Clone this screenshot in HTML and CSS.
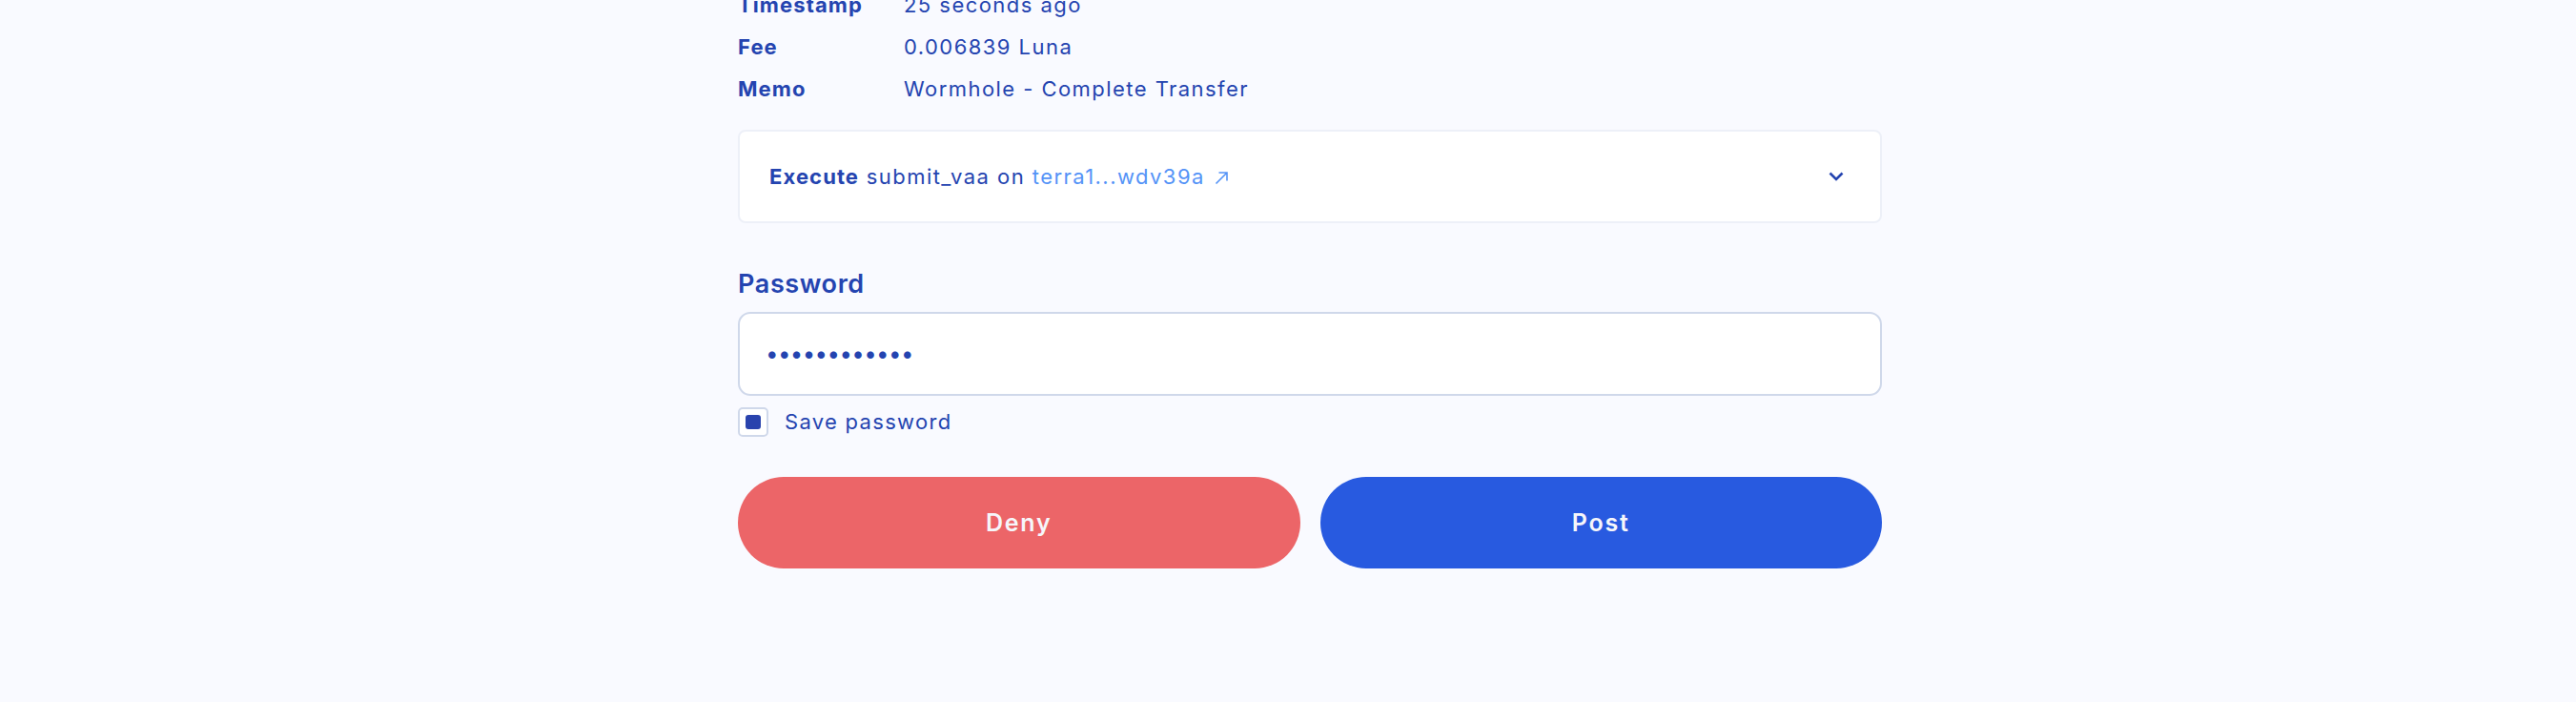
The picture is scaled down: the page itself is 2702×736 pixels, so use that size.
FILE: index.html
```html
<!DOCTYPE html>
<html lang="en">
<head>
<meta charset="utf-8">
<title>Confirm transaction</title>
<link rel="stylesheet" href="styles.css">
</head>
<body>
<main class="page">
  <dl class="details">
    <dt>Timestamp</dt><dd>25 seconds ago</dd>
    <dt>Fee</dt><dd>0.006839 Luna</dd>
    <dt>Memo</dt><dd>Wormhole - Complete Transfer</dd>
  </dl>

  <section class="msg">
    <div class="msg-text">
      <strong>Execute</strong> submit_vaa on <a class="link" href="#">terra1...wdv39a<svg class="ext" width="15" height="15" viewBox="0 0 15 15" aria-hidden="true"><path d="M1.5 13.5 L13 2 M4.5 2 H13 V10.5" fill="none" stroke="currentColor" stroke-width="1.6"/></svg></a>
    </div>
    <svg class="chev" width="16" height="10" viewBox="0 0 16 10" aria-hidden="true"><path d="M1.5 1.5 L8 8 L14.5 1.5" fill="none" stroke="currentColor" stroke-width="2.6"/></svg>
  </section>

  <label class="field-label" for="pw">Password</label>
  <div class="input" id="pw"><span class="dots">••••••••••••</span></div>

  <div class="check-row">
    <span class="checkbox"><span class="checkbox-mark"></span></span>
    <span class="check-label">Save password</span>
  </div>

  <div class="actions">
    <button class="btn btn-deny">Deny</button>
    <button class="btn btn-post">Post</button>
  </div>
</main>
</body>
</html>
```
FILE: styles.css
```css
html, body {
  margin: 0;
  padding: 0;
  background: #f9faff;
}
body {
  font-family: "Inter", "Liberation Sans", sans-serif;
  color: #2444b0;
  overflow: hidden;
  height: 736px;
}
.page {
  width: 1200px;
  margin-left: 774px;
  display: flex;
  flex-direction: column;
}
.details {
  margin: -10px 0 0 0;
  display: grid;
  grid-template-columns: 174px 1fr;
  row-gap: 14px;
  font-size: 22px;
  line-height: 30px;
  letter-spacing: 1.45px;
}
.details dt {
  font-weight: 700;
  letter-spacing: 1.1px;
}
.details dd {
  margin: 0;
  font-weight: 400;
}
.msg {
  margin-top: 28px;
  height: 98px;
  box-sizing: border-box;
  background: #ffffff;
  border: 2px solid #edf0f8;
  border-radius: 8px;
  padding: 0 38px 0 31px;
  display: flex;
  align-items: center;
  justify-content: space-between;
}
.msg-text {
  font-size: 22px;
  line-height: 30px;
  letter-spacing: 1.45px;
}
.msg-text strong {
  font-weight: 700;
  letter-spacing: 1.1px;
}
.link {
  color: #5493f7;
  text-decoration: none;
}
.ext {
  margin-left: 10px;
  vertical-align: -1px;
}
.chev {
  color: #2444b0;
  display: block;
}
.field-label {
  margin-top: 46px;
  font-size: 27px;
  line-height: 36px;
  font-weight: 600;
  letter-spacing: 0.6px;
}
.input {
  margin-top: 11px;
  height: 88px;
  box-sizing: border-box;
  background: #ffffff;
  border: 2px solid #cfd8ea;
  border-radius: 13px;
  padding: 0 27px;
  display: flex;
  align-items: center;
}
.dots {
  font-size: 24px;
  letter-spacing: -0.6px;
  line-height: 1;
}
.check-row {
  margin-top: 12px;
  height: 30px;
  display: flex;
  align-items: center;
  gap: 17px;
}
.checkbox {
  width: 32px;
  height: 31px;
  box-sizing: border-box;
  border: 2px solid #cfd8ea;
  border-radius: 5px;
  background: #ffffff;
  display: flex;
  align-items: center;
  justify-content: center;
}
.checkbox-mark {
  width: 16px;
  height: 15px;
  border-radius: 3px;
  background: #2943ad;
}
.check-label {
  font-size: 22px;
  line-height: 30px;
  letter-spacing: 1.3px;
}
.actions {
  margin-top: 43px;
  display: grid;
  grid-template-columns: 1fr 1fr;
  gap: 21px;
}
.btn {
  height: 96px;
  border: none;
  border-radius: 48px;
  font-family: inherit;
  font-size: 25px;
  font-weight: 600;
  letter-spacing: 1.8px;
  color: #f6f6fa;
  cursor: pointer;
}
.btn-deny {
  background: #ec6568;
}
.btn-post {
  background: #285ae0;
}
```
